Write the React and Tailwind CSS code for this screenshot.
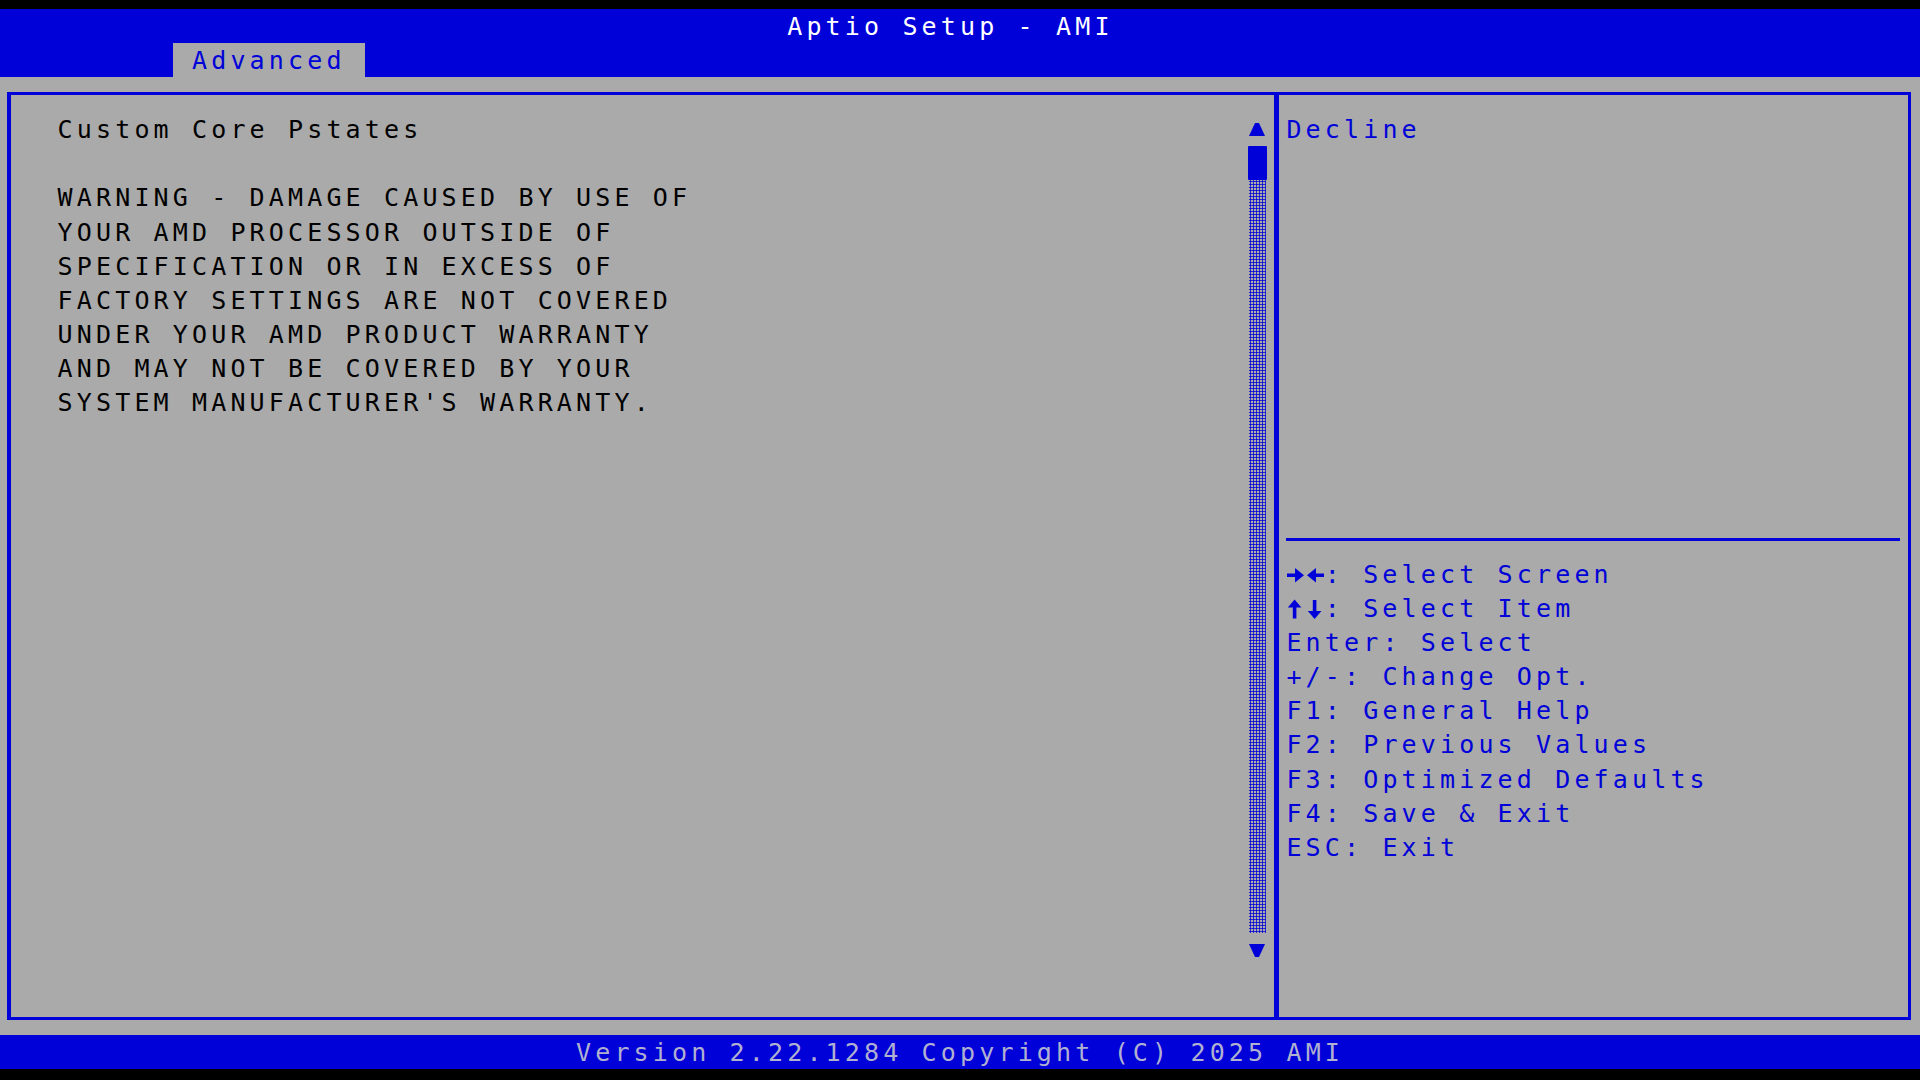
import React from 'react';

const BLUE = 'text-[#0000d8]';

const warning = [
  'WARNING - DAMAGE CAUSED BY USE OF',
  'YOUR AMD PROCESSOR OUTSIDE OF',
  'SPECIFICATION OR IN EXCESS OF',
  'FACTORY SETTINGS ARE NOT COVERED',
  'UNDER YOUR AMD PRODUCT WARRANTY',
  'AND MAY NOT BE COVERED BY YOUR',
  "SYSTEM MANUFACTURER'S WARRANTY.",
];

const helpLines = [
  'Enter: Select',
  '+/-: Change Opt.',
  'F1: General Help',
  'F2: Previous Values',
  'F3: Optimized Defaults',
  'F4: Save & Exit',
  'ESC: Exit',
];

// one character cell wide arrow glyph, drawn like the bold BIOS font arrows
const ArrowCell = ({ dir }) => (
  <svg width="19.2" height="34.2" viewBox="0 0 19.2 34.2" fill="#0000d8" className="shrink-0">
    {dir === 'right' && (
      <>
        <rect x="1" y="15.5" width="10" height="3.5" />
        <polygon points="9,10 18,17.2 9,24.4" />
      </>
    )}
    {dir === 'left' && (
      <>
        <rect x="8" y="15.5" width="10" height="3.5" />
        <polygon points="1,17.2 10,10 10,24.4" />
      </>
    )}
    {dir === 'up' && (
      <>
        <polygon points="8.6,7.5 15.4,15.5 1.8,15.5" />
        <rect x="6.8" y="14" width="3.6" height="12.5" />
      </>
    )}
    {dir === 'down' && (
      <>
        <rect x="6.8" y="8" width="3.6" height="12.5" />
        <polygon points="1.8,19 15.4,19 8.6,27" />
      </>
    )}
  </svg>
);

const ScrollBar = () => (
  <div className="w-[19px] flex flex-col mr-[7px]">
    <div className="h-[34.2px] flex items-start justify-center pt-[11px] pr-[2px]">
      <svg width="16" height="13" viewBox="0 0 16 13" fill="#0000d8">
        <polygon points="6,0 10,0 16,13 0,13" />
      </svg>
    </div>
    <div className="h-[34.2px] bg-[#0000d8] rounded-[1px]" />
    <div className="h-[752.4px] mx-[1px] bg-[radial-gradient(circle,#0000d8_0.9px,transparent_1.3px)] bg-[length:3px_3px]" />
    <div className="h-[34.2px] flex items-start justify-center pt-[11px] pr-[2px]">
      <svg width="16" height="13" viewBox="0 0 16 13" fill="#0000d8">
        <polygon points="0,0 16,0 10,13 6,13" />
      </svg>
    </div>
  </div>
);

export default function App() {
  return (
    <div className="w-[1920px] h-[1080px] bg-black overflow-hidden font-['DejaVu_Sans_Mono',monospace] text-[25px] leading-[34.2px] tracking-[4.15px] whitespace-pre">
      <div className="h-[9px]" />

      {/* header */}
      <div className="bg-[#0000d8]">
        <div className="h-[34.2px] pl-[787.2px] pt-[1px] text-white">Aptio Setup - AMI</div>
        <div className="h-[34.2px] flex">
          <div className={`ml-[172.8px] w-[192px] pl-[19.2px] pt-[1px] bg-[#aaaaaa] ${BLUE}`}>Advanced</div>
        </div>
      </div>

      {/* main area */}
      <div className="h-[957.6px] bg-[#aaaaaa] pt-[15px] pl-[7px] pr-[9px]">
        <div className="h-[928px] border-[3px] border-l-4 border-[#0000d8] flex">
          {/* left panel */}
          <div className="flex-1 flex pt-[16.6px]">
            <div className="flex-1 pl-[46.6px] pt-[1px] text-black">
              <div className="h-[34.2px]">Custom Core Pstates</div>
              <div className="h-[34.2px]" />
              {warning.map((line) => (
                <div key={line} className="h-[34.2px]">{line}</div>
              ))}
            </div>
            <ScrollBar />
          </div>

          {/* right panel */}
          <div className="w-[634px] border-l-[5px] border-[#0000d8] pt-[16.6px] pl-[7.4px] pr-[8px]">
            <div className={`h-[34.2px] pt-[1px] ${BLUE}`}>Decline</div>
            <div className="h-[376.2px]" />
            <div className="h-[34.2px] flex items-center">
              <div className="h-[3px] w-full bg-[#0000d8]" />
            </div>
            <div className={`${BLUE} pt-[1px]`}>
              <div className="h-[34.2px] flex">
                <ArrowCell dir="right" />
                <ArrowCell dir="left" />
                <span>: Select Screen</span>
              </div>
              <div className="h-[34.2px] flex">
                <ArrowCell dir="up" />
                <ArrowCell dir="down" />
                <span>: Select Item</span>
              </div>
              {helpLines.map((line) => (
                <div key={line} className="h-[34.2px]">{line}</div>
              ))}
            </div>
          </div>
        </div>
      </div>

      {/* footer */}
      <div className="h-[34.2px] bg-[#0000d8] pl-[576px] pt-[1px] text-[#b0b0d0]">
        Version 2.22.1284 Copyright (C) 2025 AMI
      </div>
    </div>
  );
}
